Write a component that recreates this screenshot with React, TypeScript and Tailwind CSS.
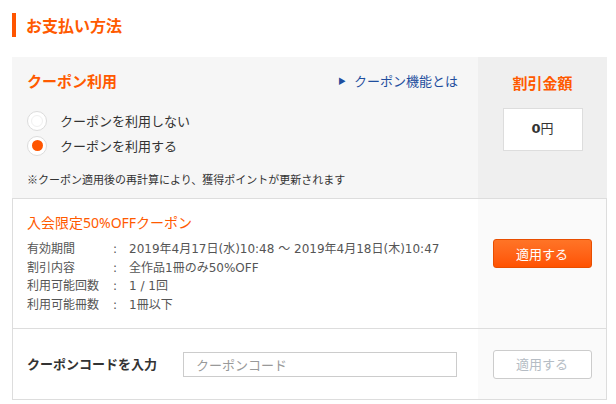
import { useState } from "react";

const font = { fontFamily: '"Noto Sans CJK JP", "Noto Sans", sans-serif' };
const latinFirst = { fontFamily: '"Noto Sans", "Noto Sans CJK JP", sans-serif' };
// Verdana-like Latin widths, close to the original Meiryo rendering
const wideLatin = { fontFamily: '"DejaVu Sans", "Noto Sans CJK JP", sans-serif' };

type CouponDetail = {
  label: string;
  value: string;
};

const couponDetails: CouponDetail[] = [
  { label: "有効期間", value: "2019年4月17日(水)10:48 ～ 2019年4月18日(木)10:47" },
  { label: "割引内容", value: "全作品1冊のみ50%OFF" },
  { label: "利用可能回数", value: "1 / 1回" },
  { label: "利用可能冊数", value: "1冊以下" },
];

function Radio({ checked, label, onClick }: { checked: boolean; label: string; onClick: () => void }) {
  return (
    <button type="button" onClick={onClick} className="flex h-[25px] items-center gap-[13px] text-left">
      <span className="flex h-[20px] w-[20px] items-center justify-center rounded-full border border-[#dcdcdc] bg-white">
        {checked ? (
          <span className="h-[11px] w-[11px] rounded-full bg-[#ff5500]" />
        ) : (
          <span className="h-[12px] w-[12px] rounded-full border border-[#f0f0f0]" />
        )}
      </span>
      <span className="text-[13px] text-[#333]">{label}</span>
    </button>
  );
}

export default function App() {
  const [useCoupon, setUseCoupon] = useState(true);
  const [code, setCode] = useState("");

  return (
    <div className="min-h-[404px] bg-white pl-3 pt-[13px]" style={font}>
      <h2 className="flex h-[24px] items-center border-l-4 border-[#ff5500] pl-[10px] text-[16px] font-bold text-[#ff5a00]">
        お支払い方法
      </h2>

      <div className="mt-[20px] w-[595px]">
        <div className="flex h-[142px] border-b border-[#dddddd]">
          <div className="flex flex-1 flex-col bg-[#f6f6f6] pl-[15px] pr-[20px]">
            <div className="mt-[14px] flex h-[20px] items-center justify-between">
              <span className="text-[15px] font-bold text-[#ff5a00]">クーポン利用</span>
              <a href="#" className="flex items-center gap-[8px] text-[13px] text-[#1f4e9e]">
                <span className="text-[8px] text-[#1f4e9e]">▶</span>
                クーポン機能とは
              </a>
            </div>
            <div className="mt-[17px] flex flex-col">
              <Radio checked={!useCoupon} label="クーポンを利用しない" onClick={() => setUseCoupon(false)} />
              <Radio checked={useCoupon} label="クーポンを利用する" onClick={() => setUseCoupon(true)} />
            </div>
            <p className="mt-[13px] text-[11px] text-[#333]">※クーポン適用後の再計算により、獲得ポイントが更新されます</p>
          </div>
          <div className="flex w-[129px] flex-col items-center bg-[#efefef]">
            <span className="mt-[15px] text-[15px] font-bold text-[#ff5a00]">割引金額</span>
            <div
              className="mt-[13px] flex h-[43px] w-[80px] items-center justify-center border border-[#dddddd] bg-white text-[13px] text-[#333]"
              style={wideLatin}
            >
              <span className="font-bold">0</span>円
            </div>
          </div>
        </div>

        <div className="flex h-[130px] border-x border-b border-[#dddddd]">
          <div className="flex-1 bg-white pl-[14px] pt-[13px]">
            <p className="text-[14px] text-[#ff5a00]" style={latinFirst}>
              入会限定50%OFFクーポン
            </p>
            <dl className="mt-[7px] text-[12px] leading-[18.5px] text-[#555]" style={wideLatin}>
              {couponDetails.map((d) => (
                <div key={d.label} className="flex">
                  <dt className="w-[86px]">{d.label}</dt>
                  <dd className="w-[16px]">:</dd>
                  <dd>{d.value}</dd>
                </div>
              ))}
            </dl>
          </div>
          <div className="flex w-[128px] items-start justify-center bg-[#fafafa] pt-[40px]">
            <button
              type="button"
              className="h-[29px] w-[99px] rounded-[3px] border border-[#e84e00] bg-gradient-to-b from-[#ff7426] to-[#ff5200] text-[13px] text-white"
            >
              適用する
            </button>
          </div>
        </div>

        <div className="flex h-[71px] border-x border-b border-[#dddddd]">
          <div className="flex flex-1 items-center bg-white pl-[14px]">
            <span className="w-[156px] text-[13px] font-bold text-[#333]">クーポンコードを入力</span>
            <input
              value={code}
              onChange={(e) => setCode(e.target.value)}
              placeholder="クーポンコード"
              className="h-[25px] w-[274px] border border-[#cccccc] px-[12px] text-[13px] text-[#333] outline-none placeholder:text-[#999]"
            />
          </div>
          <div className="flex w-[128px] items-center justify-center bg-[#fafafa]">
            <button
              type="button"
              disabled
              className="h-[29px] w-[99px] rounded-[3px] border border-[#cccccc] bg-white text-[13px] text-[#b5bcc4]"
            >
              適用する
            </button>
          </div>
        </div>
      </div>
    </div>
  );
}
